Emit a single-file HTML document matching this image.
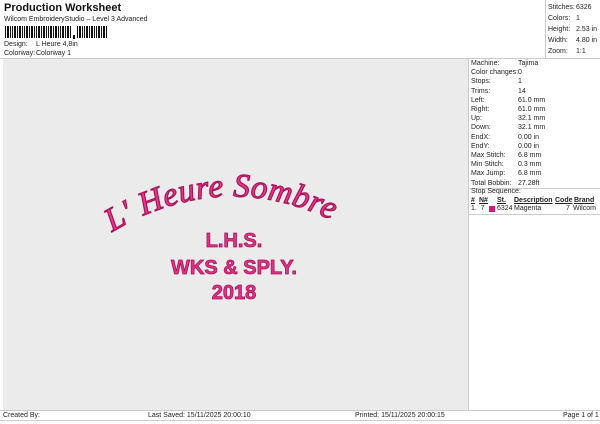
<!DOCTYPE html>
<html><head><meta charset="utf-8"><style>
*{margin:0;padding:0;box-sizing:border-box}
body{width:600px;height:424px;background:#fff;font-family:"Liberation Sans",sans-serif;font-size:7px;color:#222;position:relative;overflow:hidden}
.a{position:absolute;white-space:nowrap}
</style></head><body>
<div class="a" style="left:4px;top:2px;font-size:11px;font-weight:bold;color:#111">Production Worksheet</div>
<div class="a" style="left:4px;top:16px">Wilcom EmbroideryStudio – Level 3 Advanced</div>
<svg class="a" style="left:5px;top:26px" width="105" height="13">
<g fill="#111">
<rect x="0" y="0" width="1" height="12"/><rect x="2" y="0" width="2" height="12"/><rect x="5" y="0" width="1" height="12"/><rect x="7" y="0" width="1" height="12"/><rect x="9" y="0" width="2" height="12"/><rect x="12" y="0" width="1" height="12"/><rect x="14" y="0" width="2" height="12"/><rect x="17" y="0" width="1" height="12"/><rect x="19" y="0" width="1" height="12"/><rect x="21" y="0" width="2" height="12"/><rect x="24" y="0" width="1" height="12"/><rect x="26" y="0" width="2" height="12"/><rect x="29" y="0" width="1" height="12"/><rect x="31" y="0" width="1" height="12"/><rect x="33" y="0" width="2" height="12"/><rect x="36" y="0" width="1" height="12"/><rect x="38" y="0" width="2" height="12"/><rect x="41" y="0" width="1" height="12"/><rect x="43" y="0" width="1" height="12"/><rect x="45" y="0" width="2" height="12"/><rect x="48" y="0" width="1" height="12"/><rect x="50" y="0" width="2" height="12"/><rect x="53" y="0" width="1" height="12"/><rect x="55" y="0" width="1" height="12"/><rect x="57" y="0" width="2" height="12"/><rect x="60" y="0" width="1" height="12"/><rect x="62" y="0" width="2" height="12"/><rect x="65" y="0" width="1" height="12"/>
<rect x="68" y="9" width="2" height="4"/>
<rect x="72" y="0" width="1" height="12"/><rect x="74" y="0" width="2" height="12"/><rect x="77" y="0" width="1" height="12"/><rect x="79" y="0" width="1" height="12"/><rect x="81" y="0" width="2" height="12"/><rect x="84" y="0" width="1" height="12"/><rect x="86" y="0" width="2" height="12"/><rect x="89" y="0" width="1" height="12"/><rect x="91" y="0" width="1" height="12"/><rect x="93" y="0" width="2" height="12"/><rect x="96" y="0" width="1" height="12"/><rect x="98" y="0" width="2" height="12"/><rect x="101" y="0" width="1" height="12"/></g></svg>
<div class="a" style="left:4px;top:41px">Design:</div><div class="a" style="left:36px;top:41px">L Heure 4,8in</div>
<div class="a" style="left:4px;top:50px">Colorway:</div><div class="a" style="left:36px;top:50px">Colorway 1</div>
<div class="a" style="left:545px;top:0;width:55px;height:59px;border-left:1px solid #ccc"></div>
<div class="a" style="left:548px;top:2px;line-height:11px">Stitches:<br>Colors:<br>Height:<br>Width:<br>Zoom:</div>
<div class="a" style="left:576px;top:2px;line-height:11px">6326<br>1<br>2.53 in<br>4.80 in<br>1:1</div>
<div class="a" style="left:0;top:58px;width:600px;border-top:1px solid #ccc"></div>
<div class="a" style="left:3px;top:59px;width:465px;height:351px;background:#ebebeb"></div>
<div class="a" style="left:468px;top:59px;width:132px;height:351px;border-left:1px solid #ccc"></div>
<div class="a" style="left:471px;top:59px;line-height:9.2px">Machine:<br>Color changes:<br>Stops:<br>Trims:<br>Left:<br>Right:<br>Up:<br>Down:<br>EndX:<br>EndY:<br>Max Stitch:<br>Min Stitch:<br>Max Jump:<br>Total Bobbin:</div>
<div class="a" style="left:518px;top:59px;line-height:9.2px">Tajima<br>0<br>1<br>14<br>61.0 mm<br>61.0 mm<br>32.1 mm<br>32.1 mm<br>0.00 in<br>0.00 in<br>6.8 mm<br>0.3 mm<br>6.8 mm<br>27.28ft</div>
<div class="a" style="left:468px;top:188px;width:132px;border-top:1px solid #ccc"></div>
<div class="a" style="left:471px;top:188px">Stop Sequence:</div>
<div class="a" style="left:471px;top:197px;font-weight:bold;text-decoration:underline">#</div>
<div class="a" style="left:479px;top:197px;font-weight:bold;text-decoration:underline">N#</div>
<div class="a" style="left:497px;top:197px;font-weight:bold;text-decoration:underline">St.</div>
<div class="a" style="left:514px;top:197px;font-weight:bold;text-decoration:underline">Description</div>
<div class="a" style="left:555px;top:197px;font-weight:bold;text-decoration:underline">Code</div>
<div class="a" style="left:574px;top:197px;font-weight:bold;text-decoration:underline">Brand</div>
<div class="a" style="left:471px;top:205px">1.&nbsp; 7</div>
<div class="a" style="left:489px;top:206px;width:6px;height:6px;background:#e0147a"></div>
<div class="a" style="left:497px;top:205px">6324</div><div class="a" style="left:514px;top:205px">Magenta</div>
<div class="a" style="left:566px;top:205px">7</div><div class="a" style="left:573px;top:205px">Wilcom</div>
<div class="a" style="left:468px;top:214px;width:132px;border-top:1px solid #ccc"></div>
<svg class="a" style="left:0;top:0" width="600" height="424">
<defs><path id="arc" d="M112 232 Q235 158 365 238"/></defs>
<text font-family="Liberation Serif" font-style="italic" font-size="33" fill="#e8368a" stroke="#a8155a" stroke-width="1.2" letter-spacing="0.5"><textPath href="#arc">L' Heure Sombre</textPath></text>
<g font-family="Liberation Sans" font-weight="bold" fill="#e03285" stroke="#a8155a" stroke-width="0.8" text-anchor="middle">
<text x="234" y="247" font-size="20">L.H.S.</text>
<text x="234" y="274" font-size="20">WKS &amp; SPLY.</text>
<text x="234" y="299" font-size="20">2018</text></g>
</svg>
<div class="a" style="left:0;top:410px;width:600px;border-top:1px solid #ccc"></div>
<div class="a" style="left:3px;top:412px">Created By:</div>
<div class="a" style="left:148px;top:412px">Last Saved: 15/11/2025 20:00:10</div>
<div class="a" style="left:355px;top:412px">Printed: 15/11/2025 20:00:15</div>
<div class="a" style="left:563px;top:412px">Page 1 of 1</div>
<div class="a" style="left:0;top:420px;width:600px;border-top:1px solid #ccc"></div>
</body></html>
